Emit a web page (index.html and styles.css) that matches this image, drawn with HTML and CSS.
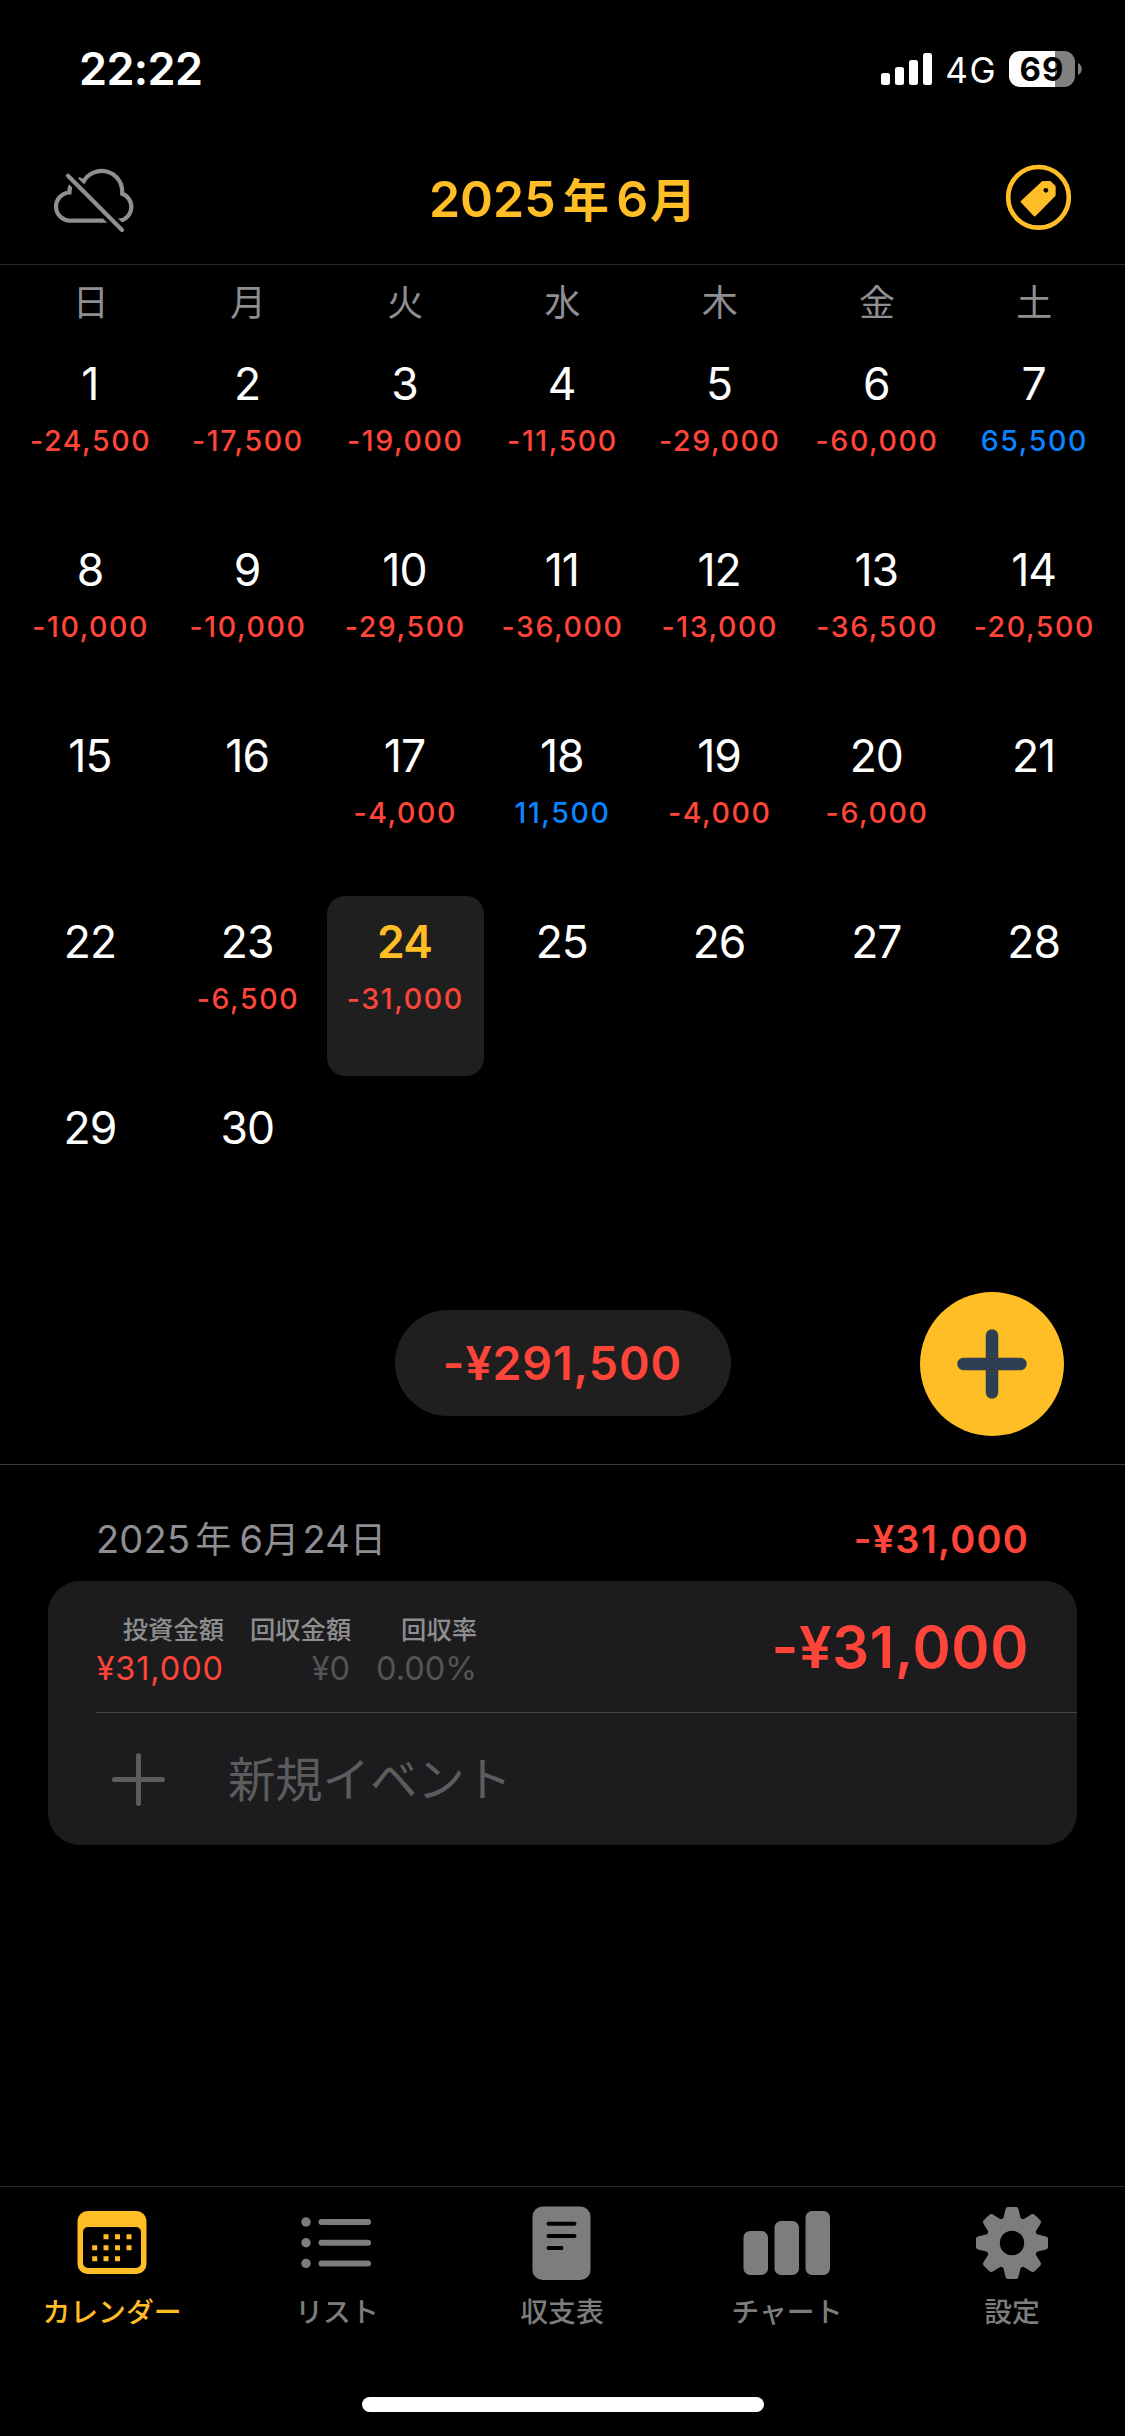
FILE: index.html
```
<!DOCTYPE html>
<html lang="ja">
<head>
<meta charset="utf-8">
<title>カレンダー</title>
<link rel="stylesheet" href="styles.css">
</head>
<body>
<header class="status">
  <span class="clock">22:22</span>
  <div class="status-right">
    <svg class="signal" width="51" height="32" viewBox="0 0 51 32"><rect x="0" y="20" width="9" height="12" rx="2.5"/><rect x="14" y="14" width="9" height="18" rx="2.5"/><rect x="28" y="7" width="9" height="25" rx="2.5"/><rect x="42" y="0" width="9" height="32" rx="2.5"/></svg>
    <span class="network">4G</span>
    <div class="battery">69</div>
    <svg class="battery-cap" width="4" height="12" viewBox="0 0 4 12"><path d="M0 0C5 2 5 10 0 12Z"/></svg>
  </div>
</header>

<nav class="nav">
  <svg class="cloud" width="100" height="84" viewBox="0 0 100 84">
    <path class="cloud-line" d="M26.2 62.7H74.5A13.6 13.9 0 0 0 77.2 35.8V33A20.6 20.6 0 0 0 38.6 23.5L34.5 21.5C28 22.5 24.4 27 24.4 34.5A14.3 14.1 0 0 0 26.2 62.7Z"/>
    <path class="cloud-gap" d="M20 14.7L80 75"/>
    <path class="cloud-line" d="M23 17.7L77 72"/>
  </svg>
  <h1 class="title">2025<span class="kanji year">年</span>6<span class="kanji month">月</span></h1>
  <svg class="tag" width="84" height="84" viewBox="0 0 252 252">
    <circle cx="127.5" cy="124" r="91" fill="none" stroke="#ffbe26" stroke-width="14"/>
    <path d="M141 79H162L175 92V117L116 177L78 137Z" fill="#ffbe26" stroke="#ffbe26" stroke-width="8" stroke-linejoin="round"/>
    <circle cx="149.5" cy="103" r="7"/>
  </svg>
</nav>

<section class="calendar">
  <div class="weekdays"><span>日</span><span>月</span><span>火</span><span>水</span><span>木</span><span>金</span><span>土</span></div>
  <div class="days">
    <div class="day"><b>1</b><i>-24,500</i></div>
    <div class="day"><b>2</b><i>-17,500</i></div>
    <div class="day"><b>3</b><i>-19,000</i></div>
    <div class="day"><b>4</b><i>-11,500</i></div>
    <div class="day"><b>5</b><i>-29,000</i></div>
    <div class="day"><b>6</b><i>-60,000</i></div>
    <div class="day gain"><b>7</b><i>65,500</i></div>
    <div class="day"><b>8</b><i>-10,000</i></div>
    <div class="day"><b>9</b><i>-10,000</i></div>
    <div class="day"><b>10</b><i>-29,500</i></div>
    <div class="day"><b>11</b><i>-36,000</i></div>
    <div class="day"><b>12</b><i>-13,000</i></div>
    <div class="day"><b>13</b><i>-36,500</i></div>
    <div class="day"><b>14</b><i>-20,500</i></div>
    <div class="day"><b>15</b></div>
    <div class="day"><b>16</b></div>
    <div class="day"><b>17</b><i>-4,000</i></div>
    <div class="day gain"><b>18</b><i>11,500</i></div>
    <div class="day"><b>19</b><i>-4,000</i></div>
    <div class="day"><b>20</b><i>-6,000</i></div>
    <div class="day"><b>21</b></div>
    <div class="day"><b>22</b></div>
    <div class="day"><b>23</b><i>-6,500</i></div>
    <div class="day selected"><b>24</b><i>-31,000</i></div>
    <div class="day"><b>25</b></div>
    <div class="day"><b>26</b></div>
    <div class="day"><b>27</b></div>
    <div class="day"><b>28</b></div>
    <div class="day"><b>29</b></div>
    <div class="day"><b>30</b></div>
  </div>
</section>

<section class="summary">
  <div class="total">-¥291,500</div>
  <button class="fab" aria-label="追加"><svg width="70" height="70" viewBox="0 0 70 70"><path d="M35 6.5V63.5M6.5 35H63.5"/></svg></button>
</section>

<main class="detail">
  <div class="detail-head">
    <h2 class="date">2025<span class="kanji y">年</span>6<span class="kanji m">月</span>24<span class="kanji">日</span></h2>
    <span class="day-total">-¥31,000</span>
  </div>
  <div class="card">
    <div class="entry">
      <dl class="stat invest"><dt>投資金額</dt><dd>¥31,000</dd></dl>
      <dl class="stat payout"><dt>回収金額</dt><dd>¥0</dd></dl>
      <dl class="stat rate"><dt>回収率</dt><dd>0.00%</dd></dl>
      <span class="entry-total">-¥31,000</span>
    </div>
    <div class="new-event">
      <svg width="53" height="53" viewBox="0 0 53 53"><path d="M26.5 2.5V50.5M2.5 26.5H50.5"/></svg>
      <span>新規イベント</span>
    </div>
  </div>
</main>

<footer class="tabbar">
  <div class="tabs">
    <div class="tab active">
      <svg width="80" height="80" viewBox="0 0 80 80"><path fill-rule="evenodd" d="M15.500 8H64.500A10 10 0 0 1 74.500 18V61A10 10 0 0 1 64.500 71H15.500A10 10 0 0 1 5.500 61V18A10 10 0 0 1 15.500 8ZM16 24A5 5 0 0 0 11 29V60A5 5 0 0 0 16 65H64A5 5 0 0 0 69 60V29A5 5 0 0 0 64 24Z"/><path class="dots" d="M31.500 31.200h5v5h-5zM43 31.200h5v5h-5zM54.500 31.200h5v5h-5zM20.200 42.200h5v5h-5zM31.500 42.200h5v5h-5zM43 42.200h5v5h-5zM54.500 42.200h5v5h-5zM20.200 53.200h5v5h-5zM31.500 53.200h5v5h-5zM43 53.200h5v5h-5z"/></svg>
      <span>カレンダー</span>
    </div>
    <div class="tab">
      <svg width="80" height="80" viewBox="0 0 80 80"><circle cx="9" cy="19" r="4.7"/><circle cx="9" cy="39.7" r="4.7"/><circle cx="9" cy="60.4" r="4.7"/><rect x="21.5" y="16" width="52.5" height="6" rx="3"/><rect x="21.5" y="36.7" width="52.5" height="6" rx="3"/><rect x="21.5" y="57.4" width="52.5" height="6" rx="3"/></svg>
      <span>リスト</span>
    </div>
    <div class="tab">
      <svg width="80" height="80" viewBox="0 0 80 80"><rect x="10.5" y="3.5" width="58" height="73.5" rx="10"/><path class="lines" d="M26.5 20.7H52.5M26.5 33H52.5M26.5 45H39.5"/></svg>
      <span>収支表</span>
    </div>
    <div class="tab">
      <svg width="88" height="80" viewBox="0 0 88 80"><rect x="0.5" y="28" width="24.5" height="44" rx="6.5"/><rect x="31.5" y="18" width="24.5" height="54" rx="6.5"/><rect x="62.5" y="8" width="24.5" height="64" rx="6.5"/></svg>
      <span>チャート</span>
    </div>
    <div class="tab">
      <svg width="80" height="80" viewBox="-40 -40 80 80">
        <defs><path id="tooth" d="M-4 -33.500H4L6.800 -22H-6.800Z" stroke="#7d7d7d" stroke-width="5" stroke-linejoin="round"/></defs>
        <circle r="26.300"/>
        <use href="#tooth"/><use href="#tooth" transform="rotate(45)"/><use href="#tooth" transform="rotate(90)"/><use href="#tooth" transform="rotate(135)"/><use href="#tooth" transform="rotate(180)"/><use href="#tooth" transform="rotate(225)"/><use href="#tooth" transform="rotate(270)"/><use href="#tooth" transform="rotate(315)"/>
        <circle class="hole" r="12.200"/>
      </svg>
      <span>設定</span>
    </div>
  </div>
  <div class="home-indicator"></div>
</footer>
</body>
</html>
```
FILE: styles.css
```
* { box-sizing: border-box; margin: 0; padding: 0; }

body {
  width: 1125px;
  height: 2436px;
  display: flex;
  flex-direction: column;
  background: #000;
  color: #fff;
  font-family: Inter, "Noto Sans CJK JP", sans-serif;
  overflow: hidden;
}

svg { display: block; flex: none; }
b, i { font-style: normal; font-weight: 400; }

/* Status bar */
.status {
  height: 137px;
  padding: 0 43px 0 79px;
  display: flex;
  justify-content: space-between;
  line-height: 138px;
}
.clock { font-size: 45px; font-weight: 600; letter-spacing: -0.6px; }
.status-right { display: flex; align-items: center; }
.signal { fill: #fff; margin-right: 13px; }
.network { font-size: 35px; letter-spacing: 1.5px; padding-top: 3px; margin-right: 12px; }
.battery {
  width: 66px;
  height: 36px;
  border-radius: 11px;
  background: linear-gradient(90deg, #fff 46px, #808080 46px);
  color: #000;
  font-size: 33px;
  font-weight: 700;
  line-height: 36px;
  letter-spacing: 1px;
  text-align: center;
}
.battery-cap { fill: #808080; margin-left: 3px; }

/* Navigation */
.nav {
  height: 128px;
  border-bottom: 1px solid #29292b;
  padding: 0 45px;
  display: flex;
  justify-content: space-between;
}
.cloud { margin-top: 21px; }
.cloud-line { fill: none; stroke: #8e8e93; stroke-width: 4.2px; stroke-linecap: round; }
.cloud-gap { stroke: #000; stroke-width: 10.5px; }
.title {
  margin-left: -16px;
  color: #ffbe26;
  font-size: 50px;
  font-weight: 600;
  line-height: 125px;
}
.title .kanji { font-size: 46px; line-height: 1; }
.year { margin: 0 7.5px 0 7px; }
.month { margin-left: 2px; }
.tag { margin-top: 19px; }

/* Calendar */
.calendar { padding: 0 12px; }
.weekdays {
  display: grid;
  grid-template-columns: repeat(7, 1fr);
  height: 73px;
  line-height: 77px;
  font-size: 36px;
  text-align: center;
  color: #8e8e93;
}
.days {
  display: grid;
  grid-template-columns: repeat(7, 1fr);
  grid-auto-rows: 180px;
  row-gap: 6px;
}
.day { text-align: center; border-radius: 18px; }
.day b { display: block; font-size: 44.5px; line-height: 92px; letter-spacing: -1px; padding-right: 1.5px; }
.day i { display: block; font-size: 28.5px; font-weight: 500; line-height: 22px; letter-spacing: 1.6px; color: #ff453a; }
.gain i { color: #0a84ff; }
.selected { background: #1f1f1f; }
.selected b { color: #ffbe26; font-weight: 600; }

/* Month total */
.summary {
  height: 203px;
  border-bottom: 1px solid #3a3a3c;
  padding: 0 61px;
  display: grid;
  grid-template-columns: 1fr auto 1fr;
  align-items: center;
}
.total {
  grid-column: 2;
  width: 336px;
  height: 106px;
  border-radius: 53px;
  background: #1f1f1f;
  color: #ff453a;
  font-size: 46.5px;
  font-weight: 600;
  line-height: 107px;
  letter-spacing: 0.9px;
  text-align: center;
}
.fab {
  justify-self: end;
  width: 144px;
  height: 144px;
  margin-top: 2px;
  border: 0;
  border-radius: 50%;
  background: #ffbe26;
  display: grid;
  place-items: center;
}
.fab path { stroke: #2e3f51; stroke-width: 12.5px; stroke-linecap: round; }

/* Day detail */
.detail { flex: 1; padding: 0 48px; }
.detail-head {
  height: 116px;
  padding: 0 48px;
  display: flex;
  justify-content: space-between;
  line-height: 149px;
}
.date { font-size: 38px; font-weight: 400; letter-spacing: 0.2px; color: #8e8e93; }
.date .kanji { font-size: 36px; line-height: 1; }
.y { margin: 0 8px 0 5px; }
.m { margin-right: 3px; }
.day-total { font-size: 38px; font-weight: 600; letter-spacing: 1.2px; color: #ff453a; }
.card { height: 264px; border-radius: 32px; background: #1c1c1e; }
.entry {
  height: 132px;
  margin-left: 48px;
  padding-right: 48px;
  border-bottom: 1px solid #444447;
  display: flex;
  gap: 26px;
}
.stat { padding-top: 31px; text-align: right; white-space: nowrap; }
.stat dt { font-size: 25.3px; font-weight: 500; line-height: 36px; color: #8e8e8f; }
.stat dd { font-size: 32.5px; line-height: 42px; color: #545455; }
.invest { width: 128px; }
.invest dd { color: #ff453a; letter-spacing: 0.9px; }
.payout { width: 100px; }
.rate { width: 101px; }
.entry-total {
  margin-left: auto;
  font-size: 58px;
  font-weight: 600;
  line-height: 133px;
  letter-spacing: 0.6px;
  color: #ff453a;
}
.new-event {
  height: 132px;
  padding-left: 64px;
  display: flex;
  align-items: center;
  gap: 63px;
  font-size: 47.3px;
  color: #5c5c5e;
}
.new-event span { line-height: 130px; padding-top: 2px; }
.new-event path { stroke: #5c5c5e; stroke-width: 5px; stroke-linecap: round; }

/* Tab bar */
.tabbar { height: 250px; border-top: 1px solid #262627; }
.tabs { display: grid; grid-template-columns: repeat(5, 1fr); height: 210px; padding-top: 16px; }
.tab {
  display: flex;
  flex-direction: column;
  align-items: center;
  padding-right: 1px;
  font-size: 27.8px;
  font-weight: 500;
  line-height: 58px;
  color: #7d7d7d;
  fill: #7d7d7d;
}
.active { color: #ffbe26; fill: #ffbe26; }
.lines { stroke: #000; stroke-width: 4px; stroke-linecap: round; }
.hole { fill: #000; }
.home-indicator { width: 402px; height: 15px; margin: 0 auto; border-radius: 8px; background: #fff; }
```
